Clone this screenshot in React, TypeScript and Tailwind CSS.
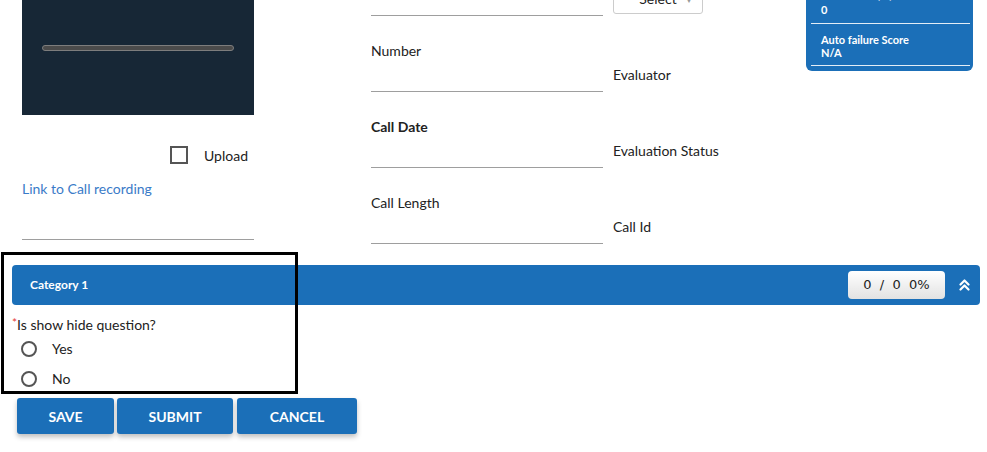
import React from 'react';

const blue = 'bg-[#1b6fb8]';

const Field: React.FC<{ label: string; bold?: boolean }> = ({ label, bold }) => (
  <div className="pt-[27px]">
    <div className={`h-[16px] leading-[16px] text-[14px] text-[#222] ${bold ? 'font-bold' : ''}`}>{label}</div>
    <div className="h-[33px] border-b border-[#9e9e9e]" />
  </div>
);

const Radio: React.FC<{ label: string }> = ({ label }) => (
  <div className="h-[30px] flex items-center">
    <span className="ml-[9px] w-[16px] h-[16px] rounded-full border-2 border-[#555] bg-white" />
    <span className="ml-[15px] text-[14px] text-[#222] leading-none">{label}</span>
  </div>
);

export default function App() {
  return (
    <div className="relative w-[987px] h-[452px] overflow-hidden bg-white font-['Lato','Liberation_Sans',sans-serif]">
      {/* top form area */}
      <div className="flex items-start h-[265px]">
        {/* left: player + upload */}
        <div className="ml-[22px] w-[232px]">
          <div className="h-[115px] bg-[#172736] pt-[45px] px-[20px]">
            <div className="h-[6px] rounded-full bg-[#4b4b4b] border border-[#7d7d7d]" />
          </div>
          <div className="mt-[31px] flex items-center justify-end h-[18px]">
            <span className="w-[18px] h-[18px] border-2 border-[#555] bg-white" />
            <span className="ml-[16px] mr-[6px] text-[14px] text-[#222]">Upload</span>
          </div>
          <div className="mt-[17px] text-[14px] leading-[16px] text-[#3a7bc8]">Link to Call recording</div>
          <div className="h-[43px] border-b border-[#9e9e9e]" />
        </div>

        {/* middle: fields */}
        <div className="ml-[117px] w-[232px]">
          <div className="h-[16px] border-b border-[#9e9e9e]" />
          <Field label="Number" />
          <Field label="Call Date" bold />
          <Field label="Call Length" />
        </div>

        {/* right: evaluator info */}
        <div className="ml-[10px] w-[150px]">
          <div className="-mt-[18px] w-[90px] h-[32px] rounded-[3px] border border-[#ccc] bg-white flex items-center justify-center relative">
            <span className="text-[14px] text-[#222]">Select</span>
            <span className="absolute right-[9px] top-[11px] text-[8px] text-[#999]">▼</span>
          </div>
          <div className="mt-[53px] h-[16px] leading-[16px] text-[14px] text-[#222]">Evaluator</div>
          <div className="mt-[60px] h-[16px] leading-[16px] text-[14px] text-[#222]">Evaluation Status</div>
          <div className="mt-[60px] h-[16px] leading-[16px] text-[14px] text-[#222]">Call Id</div>
        </div>

        {/* score card */}
        <div className={`ml-[43px] w-[167px] ${blue} rounded-b-[6px] text-white text-[11px] font-bold pl-[5px] pr-[3px] pb-[5px]`}>
          <div className="border-b border-[#e3edf6] pl-[10px] pb-[7px]">
            <div className="-mt-[12px] mb-[2px] leading-[13px]">Fatal Score (%)</div>
            <div className="leading-[13px]">0</div>
          </div>
          <div className="border-b border-[#e3edf6] pl-[10px] pt-[9px] pb-[6px]">
            <div className="leading-[13px]">Auto failure Score</div>
            <div className="leading-[13px]">N/A</div>
          </div>
        </div>
      </div>

      {/* category header */}
      <div className={`mx-[12px] mr-[7px] h-[40px] ${blue} rounded-[4px] flex items-center pl-[18px] pr-[10px]`}>
        <span className="text-[12px] font-bold text-white">Category 1</span>
        <div className="ml-auto w-[97px] h-[28px] rounded-[4px] bg-gradient-to-b from-white to-[#e2e2e2] flex items-center justify-center text-[13px] text-[#222] font-['DejaVu_Sans','Liberation_Sans',sans-serif] whitespace-pre">
          {'0  /  0  0%'}
        </div>
        <svg className="ml-[14px]" width="11" height="14" viewBox="0 0 11 14" fill="none" stroke="white" strokeWidth="2.2" strokeLinecap="round" strokeLinejoin="round">
          <path d="M1.5 6.5 L5.5 2.5 L9.5 6.5" />
          <path d="M1.5 11.5 L5.5 7.5 L9.5 11.5" />
        </svg>
      </div>

      {/* question */}
      <div className="ml-[12px] mt-[10px]">
        <div className="h-[19px] leading-[19px] text-[14px] text-[#222]">
          <span className="text-[#e53935] text-[12px] relative -top-[3px]">*</span>Is show hide question?
        </div>
        <Radio label="Yes" />
        <Radio label="No" />
      </div>

      {/* actions */}
      <div className="mt-[4px] ml-[17px] flex gap-[3px]">
        <button className={`w-[97px] h-[36px] ${blue} rounded-[3px] text-white text-[14px] font-bold shadow-[0_3px_5px_rgba(0,0,0,0.25)]`}>SAVE</button>
        <button className={`w-[116px] h-[36px] ${blue} rounded-[3px] text-white text-[14px] font-bold shadow-[0_3px_5px_rgba(0,0,0,0.25)]`}>SUBMIT</button>
        <button className={`ml-[1px] w-[120px] h-[36px] ${blue} rounded-[3px] text-white text-[14px] font-bold shadow-[0_3px_5px_rgba(0,0,0,0.25)]`}>CANCEL</button>
      </div>

      {/* highlight frame over the question block */}
      <div className="absolute left-[1px] top-[252px] w-[297px] h-[142px] border-[3px] border-black pointer-events-none" />
    </div>
  );
}
